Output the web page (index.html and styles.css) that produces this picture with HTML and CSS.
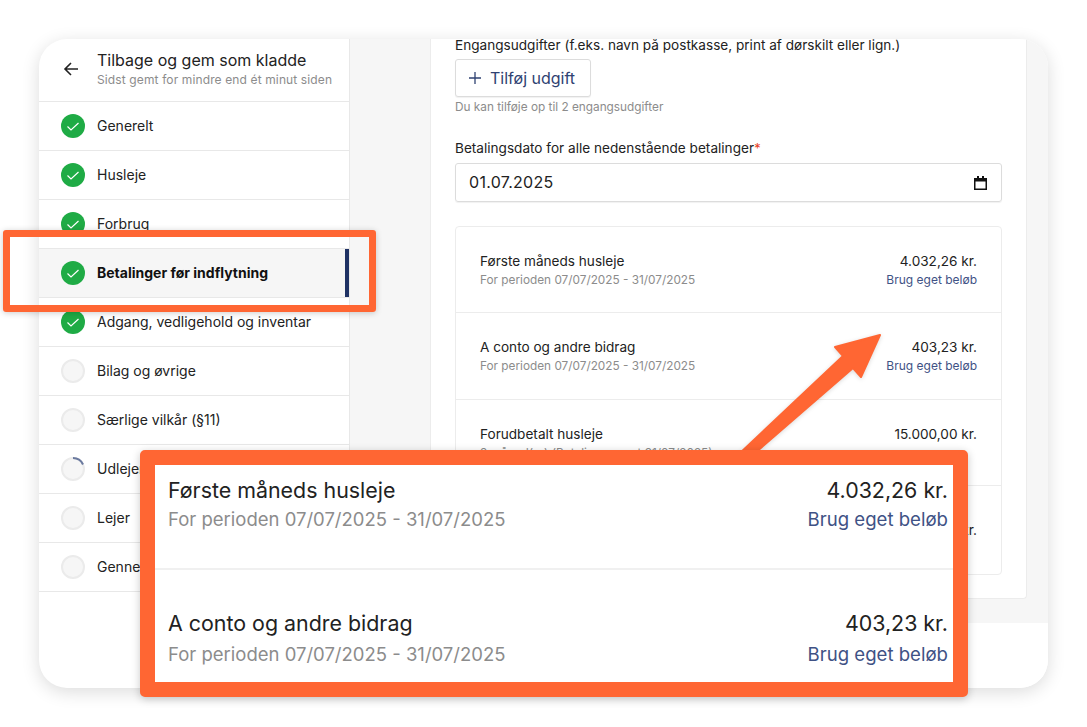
FILE: index.html
```html
<!DOCTYPE html>
<html lang="da">
<head>
    <meta charset="UTF-8">
    <meta name="viewport" content="width=device-width, initial-scale=1.0">
    <title>Betalinger før indflytning</title>
    <link rel="stylesheet" href="styles.css">
</head>
<body>
    <div class="window">
        <aside class="sidebar">
            <div class="back">
                <svg class="back-icon" width="24" height="24" viewBox="0 0 24 24" fill="none" stroke="#222" stroke-width="1.6"><path d="M19 12H6M12 6l-6 6 6 6"/></svg>
                <div>
                    <div class="back-title">Tilbage og gem som kladde</div>
                    <div class="back-sub">Sidst gemt for mindre end ét minut siden</div>
                </div>
            </div>
            <div class="step"><span class="dot done"><svg width="14" height="14" viewBox="0 0 14 14" fill="none" stroke="#fff" stroke-width="1.2"><path d="M1.5 7.5L5 11l7.5-7"/></svg></span><span class="step-text">Generelt</span></div>
            <div class="step"><span class="dot done"><svg width="14" height="14" viewBox="0 0 14 14" fill="none" stroke="#fff" stroke-width="1.2"><path d="M1.5 7.5L5 11l7.5-7"/></svg></span><span class="step-text">Husleje</span></div>
            <div class="step"><span class="dot done"><svg width="14" height="14" viewBox="0 0 14 14" fill="none" stroke="#fff" stroke-width="1.2"><path d="M1.5 7.5L5 11l7.5-7"/></svg></span><span class="step-text">Forbrug</span></div>
            <div class="step active"><span class="dot done"><svg width="14" height="14" viewBox="0 0 14 14" fill="none" stroke="#fff" stroke-width="1.2"><path d="M1.5 7.5L5 11l7.5-7"/></svg></span><span class="step-text">Betalinger før indflytning</span></div>
            <div class="step"><span class="dot done"><svg width="14" height="14" viewBox="0 0 14 14" fill="none" stroke="#fff" stroke-width="1.2"><path d="M1.5 7.5L5 11l7.5-7"/></svg></span><span class="step-text">Adgang, vedligehold og inventar</span></div>
            <div class="step"><span class="dot"></span><span class="step-text">Bilag og øvrige</span></div>
            <div class="step"><span class="dot"></span><span class="step-text">Særlige vilkår (§11)</span></div>
            <div class="step"><span class="dot progress"><svg width="24" height="24" viewBox="0 0 24 24" fill="none" stroke="#6b7a9f" stroke-width="2"><path d="M12 1a11 11 0 0 1 10 6.5"/></svg></span><span class="step-text">Udlejer</span></div>
            <div class="step"><span class="dot"></span><span class="step-text">Lejer</span></div>
            <div class="step"><span class="dot"></span><span class="step-text">Gennemse</span></div>
        </aside>

        <main class="main">
            <div class="main-body">
                <div class="card">
                    <div class="label first">Engangsudgifter (f.eks. navn på postkasse, print af dørskilt eller lign.)</div>
                    <button class="add-btn"><svg width="14" height="14" viewBox="0 0 14 14" fill="none" stroke="#2f4272" stroke-width="1.3"><path d="M7 1v12M1 7h12"/></svg>Tilføj udgift</button>
                    <div class="hint">Du kan tilføje op til 2 engangsudgifter</div>

                    <div class="label date-label">Betalingsdato for alle nedenstående betalinger<span class="req">*</span></div>
                    <div class="date-field">
                        <span class="date-value">01.07.2025</span>
                        <svg width="13" height="14" viewBox="0 0 13 14"><path d="M3 0h2v2h3V0h2v2h3v12H0V2h3zM1.5 5.5v7h10v-7z" fill="#111"/></svg>
                    </div>

                    <div class="payments">
                        <div class="pay-row">
                            <div>
                                <div class="pay-name">Første måneds husleje</div>
                                <div class="pay-sub">For perioden 07/07/2025 - 31/07/2025</div>
                            </div>
                            <div class="pay-right">
                                <div class="pay-amount">4.032,26 kr.</div>
                                <div class="pay-link">Brug eget beløb</div>
                            </div>
                        </div>
                        <div class="pay-row">
                            <div>
                                <div class="pay-name">A conto og andre bidrag</div>
                                <div class="pay-sub">For perioden 07/07/2025 - 31/07/2025</div>
                            </div>
                            <div class="pay-right">
                                <div class="pay-amount">403,23 kr.</div>
                                <div class="pay-link">Brug eget beløb</div>
                            </div>
                        </div>
                        <div class="pay-row">
                            <div>
                                <div class="pay-name">Forudbetalt husleje</div>
                                <div class="pay-sub">3 måned(er) (Betaling senest 31/07/2025)</div>
                            </div>
                            <div class="pay-right">
                                <div class="pay-amount">15.000,00 kr.</div>
                            </div>
                        </div>
                        <div class="pay-row last">
                            <div class="pay-right">
                                <div class="pay-amount">kr.</div>
                            </div>
                        </div>
                    </div>
                </div>
            </div>
            <div class="main-foot"></div>
        </main>
    </div>

    <!-- annotations on top of the screenshot -->
    <div class="mark"></div>
    <svg class="arrow" width="160" height="140" viewBox="0 0 160 140">
        <path d="M5 128L110 29 102 20 147 8 128 50 120 41 15 132z" fill="#ff6633" stroke="#ff6633" stroke-width="2" stroke-linejoin="round"/>
    </svg>
    <div class="callout">
        <div class="zoom-row">
            <div>
                <div class="zoom-name">Første måneds husleje</div>
                <div class="zoom-sub">For perioden 07/07/2025 - 31/07/2025</div>
            </div>
            <div class="zoom-right">
                <div class="zoom-amount">4.032,26 kr.</div>
                <div class="zoom-link">Brug eget beløb</div>
            </div>
        </div>
        <div class="zoom-row second">
            <div>
                <div class="zoom-name">A conto og andre bidrag</div>
                <div class="zoom-sub">For perioden 07/07/2025 - 31/07/2025</div>
            </div>
            <div class="zoom-right">
                <div class="zoom-amount">403,23 kr.</div>
                <div class="zoom-link">Brug eget beløb</div>
            </div>
        </div>
    </div>
</body>
</html>
```

FILE: styles.css
```css
* {
    box-sizing: border-box;
}
html, body {
    height: 100%;
}
body {
    margin: 0;
    padding: 39px;
    background: #fff;
    color: #222;
    font-family: Inter, "Liberation Sans", sans-serif;
    overflow: hidden;
}
.window {
    width: 1009px;
    height: 649px;
    display: flex;
    background: #fff;
    border-radius: 28px;
    box-shadow: 0 4px 18px rgba(0,0,0,0.14);
    overflow: hidden;
}

/* sidebar */
.sidebar {
    width: 311px;
    flex-shrink: 0;
    border-right: 1px solid #e8e8e8;
}
.back {
    height: 63px;
    display: flex;
    align-items: center;
    gap: 14px;
    padding: 0 0 3px 20px;
    border-bottom: 1px solid #e8e8e8;
}
.back-title {
    font-size: 16px;
    line-height: 22px;
}
.back-sub {
    font-size: 12px;
    line-height: 18px;
    color: #8c8c8c;
    letter-spacing: 0.125px;
}
.step {
    height: 49px;
    display: flex;
    align-items: center;
    gap: 12px;
    padding-left: 22px;
    border-bottom: 1px solid #e8e8e8;
    font-size: 14px;
    position: relative;
}
.step-text {
    padding-bottom: 2px;
}
.step.active {
    background: #f6f6f6;
    font-weight: 700;
    color: #111;
}
.step.active::after {
    content: "";
    position: absolute;
    right: 0;
    top: 0;
    bottom: 0;
    width: 4px;
    background: #1f3264;
}
.dot {
    width: 24px;
    height: 24px;
    border-radius: 50%;
    background: #f6f6f6;
    border: 2px solid #ebebeb;
    display: flex;
    align-items: center;
    justify-content: center;
    flex-shrink: 0;
    position: relative;
}
.dot.done {
    background: #1fab45;
    border: none;
}
.dot.progress svg {
    position: absolute;
    left: -2px;
    top: -2px;
}

/* main column */
.main {
    flex: 1;
    display: flex;
    flex-direction: column;
}
.main-body {
    height: 584px;
    background: #f6f6f6;
    padding: 0 21px 24px 80px;
}
.main-foot {
    flex: 1;
    background: #fff;
}
.card {
    height: 560px;
    background: #fff;
    border: 1px solid #ececec;
    border-top: none;
    border-radius: 0 0 4px 4px;
    padding: 0 24px;
}
.label {
    font-size: 13.6px;
    line-height: 14px;
}
.label.first {
    line-height: 12px;
}
.add-btn {
    display: flex;
    align-items: center;
    gap: 8px;
    height: 38px;
    width: 136px;
    margin-top: 8px;
    padding: 0 12px;
    background: #fff;
    border: 1px solid #dcdcdc;
    border-radius: 3px;
    box-shadow: 0 1px 1px rgba(0,0,0,0.06);
    color: #2f4272;
    font-family: inherit;
    font-size: 16px;
}
.hint {
    margin-top: 3px;
    font-size: 11.8px;
    line-height: 14px;
    color: #8c8c8c;
}
.date-label {
    margin-top: 27px;
}
.req {
    color: #e8452c;
}
.date-field {
    height: 39px;
    margin-top: 8px;
    padding: 0 14px 0 13px;
    display: flex;
    align-items: center;
    justify-content: space-between;
    border: 1px solid #dcdcdc;
    border-radius: 3px;
    box-shadow: 0 1px 1px rgba(0,0,0,0.06);
    font-size: 16px;
    letter-spacing: 0.3px;
}
.date-value {
    padding-bottom: 2px;
}
.payments {
    height: 349px;
    margin-top: 24px;
    border: 1px solid #ececec;
    border-radius: 4px;
}
.pay-row {
    height: 86.25px;
    padding: 25px 24px 0;
    display: flex;
    justify-content: space-between;
    border-bottom: 1px solid #ececec;
}
.pay-row.last {
    height: 88px;
    padding-top: 0;
    align-items: center;
    justify-content: flex-end;
    border-bottom: none;
}
.pay-name, .pay-amount {
    font-size: 13.6px;
    line-height: 18px;
    color: #222;
}
.pay-sub {
    margin-top: 2px;
    font-size: 11.8px;
    line-height: 16px;
    color: #8c8c8c;
}
.pay-right {
    text-align: right;
}
.pay-link {
    margin-top: 2px;
    font-size: 12px;
    line-height: 16px;
    color: #3f5285;
}

/* annotations */
.mark {
    position: absolute;
    left: 3px;
    top: 230px;
    width: 373px;
    height: 82px;
    border: 7px solid #ff6633;
    border-radius: 3px;
    box-shadow: 0 1px 6px rgba(0,0,0,0.2);
}
.arrow {
    position: absolute;
    left: 733px;
    top: 327px;
    filter: drop-shadow(0 1px 2px rgba(0,0,0,0.15));
}
.callout {
    position: absolute;
    left: 140px;
    top: 450px;
    width: 828px;
    height: 247px;
    background: #fff;
    border: 15px solid #ff6633;
    border-radius: 5px;
    box-shadow: 0 2px 8px rgba(0,0,0,0.22);
}
.zoom-row {
    height: 105px;
    padding: 12px 5px 0 13px;
    display: flex;
    justify-content: space-between;
    border-bottom: 2px solid #f0f0f0;
}
.zoom-row.second {
    height: auto;
    padding-top: 40px;
    border-bottom: none;
}
.zoom-name, .zoom-amount {
    font-size: 21.4px;
    line-height: 26px;
    color: #222;
}
.zoom-sub {
    margin-top: 3px;
    font-size: 18.5px;
    line-height: 26px;
    color: #8c8c8c;
}
.second .zoom-sub, .second .zoom-link {
    margin-top: 5px;
}
.zoom-right {
    text-align: right;
}
.zoom-link {
    margin-top: 3px;
    font-size: 18.6px;
    line-height: 26px;
    color: #3f5285;
}
```
